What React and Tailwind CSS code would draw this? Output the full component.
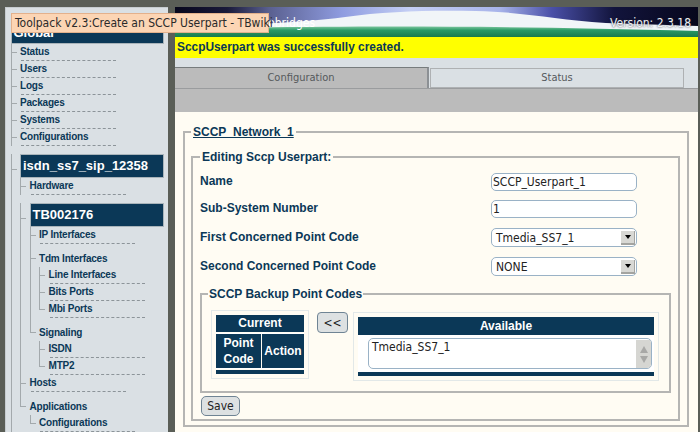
const navy = "bg-[#0b3857]";
const cond = "font-['DejaVu_Sans_Condensed','DejaVu_Sans',sans-serif] [font-stretch:condensed]";

function Tree({ items }) {
  return (
    <ul>
      {items.map((item, i) => (
        <Node key={item.label} item={item} last={i === items.length - 1 && !item.open} />
      ))}
    </ul>
  );
}

function Node({ item, last }) {
  // rows with children sit lower and have no dashed rule
  const tick = item.box ? item.tick : item.kids ? 14 : 8;
  return (
    <li className="relative pl-[9.5px]">
      <span className="absolute left-0 top-0 w-px bg-[#a3a9ac]" style={last ? { height: tick } : { bottom: 0 }} />
      <span className="absolute left-0 w-[6px] h-px bg-[#a3a9ac]" style={{ top: tick }} />
      {item.box ? (
        <div className={`${navy} text-white font-bold text-[13px] border border-[#a9b4ba] h-[24px] mt-[8px] flex items-center pl-[2px]`}>
          {item.label}
        </div>
      ) : item.kids ? (
        <div className="text-[#0b3857] font-bold text-[10px] tracking-[-0.2px] leading-[12px] h-[23px] pt-[9px]">{item.label}</div>
      ) : (
        <div className="text-[#0b3857] font-bold text-[10px] tracking-[-0.2px] leading-[12px] h-[17px] pt-[2px]">
          <div className="w-[95px] h-[15px] ml-[1px] -indent-[1px] border-b border-dashed border-[#8c9499]">{item.label}</div>
        </div>
      )}
      {item.kids && <Tree items={item.kids} />}
    </li>
  );
}

const sideTree = [
  { label: "Status" },
  { label: "Users" },
  { label: "Logs" },
  { label: "Packages" },
  { label: "Systems" },
  { label: "Configurations" },
  {
    label: "isdn_ss7_sip_12358",
    box: true,
    tick: 15,
    open: true,
    kids: [
      { label: "Hardware" },
      {
        label: "TB002176",
        box: true,
        tick: 15,
        kids: [
          { label: "IP Interfaces" },
          {
            label: "Tdm Interfaces",
            kids: [{ label: "Line Interfaces" }, { label: "Bits Ports" }, { label: "Mbi Ports" }],
          },
          {
            label: "Signaling",
            kids: [{ label: "ISDN" }, { label: "MTP2" }],
          },
        ],
      },
      { label: "Hosts" },
      {
        label: "Applications",
        kids: [{ label: "Configurations" }],
      },
    ],
  },
];

function Banner() {
  return (
    <div className="relative h-[30px] overflow-hidden bg-[#0a0a24]">
      <svg className="absolute inset-0 w-full h-full" viewBox="0 0 522 30" preserveAspectRatio="none">
        <defs>
          <linearGradient id="sky" x1="0" x2="1" y1="0" y2="0">
            <stop offset="0" stopColor="#07071c" />
            <stop offset="0.1" stopColor="#1a1a3a" />
            <stop offset="0.18" stopColor="#5a6090" />
            <stop offset="0.32" stopColor="#8f9ce0" />
            <stop offset="0.45" stopColor="#c4cef4" />
            <stop offset="0.62" stopColor="#a8b4ea" />
            <stop offset="0.72" stopColor="#4a50a8" />
            <stop offset="0.84" stopColor="#12143c" />
            <stop offset="1" stopColor="#07071c" />
          </linearGradient>
          <linearGradient id="grass" x1="0" x2="0" y1="0" y2="1">
            <stop offset="0" stopColor="#7ac49c" />
            <stop offset="0.35" stopColor="#2a9a66" />
            <stop offset="1" stopColor="#197a4c" />
          </linearGradient>
        </defs>
        <rect width="522" height="30" fill="url(#sky)" />
        <path d="M0 19 C80 18 130 15 170 10 C210 4 260 3 300 4 C350 5 380 13 430 16 L522 19 L522 30 L0 30 Z" fill="#f1f5f8" />
        <path d="M0 22 C150 19 300 18 522 24 L522 30 L0 30 Z" fill="url(#grass)" />
      </svg>
      <div className={`absolute left-[73px] top-[7px] text-[12px] text-white ${cond}`}>Telcobridges</div>
      <div className={`absolute right-[7px] top-[7px] text-[12px] text-[#eef2f4] ${cond} [text-shadow:0_0_2px_#223]`}>Version: 2.3.18</div>
    </div>
  );
}

function Tabs() {
  return (
    <div className="bg-[#dae0e4]">
      <div className="flex h-[30px] pt-[9px] pr-[14px]">
        <div className={`w-[254px] bg-[#bbbbbb] border-t border-[#777c7d] border-r-2 border-r-[#8c9094] text-center text-[11px] leading-[20px] text-[#55595c] ${cond}`}>
          Configuration
        </div>
        <div className={`ml-[1px] flex-1 h-[20px] mt-px border border-[#aeb1b3] text-center text-[11px] leading-[18px] text-[#55595c] ${cond}`}>
          Status
        </div>
      </div>
      <div className="h-[24px] bg-[#bbbbbb] border-t border-[#9a9c9e]" />
    </div>
  );
}

function Field({ label, children, className }) {
  return (
    <div className={`flex items-center justify-between ${className}`}>
      <span className="text-[12px] font-bold text-[#0b3857] pb-[2px]">{label}</span>
      {children}
    </div>
  );
}

const inputCls = `w-[146px] border border-[#9ab2c6] rounded-[5px] bg-white text-[#222] text-[12px] ${cond} outline-none`;

function Select({ value }) {
  return (
    <div className={`${inputCls} h-[19px] flex items-center justify-between pl-[4px] pr-[1px]`}>
      <span>{value}</span>
      <span className="w-[14px] h-[14px] bg-[#d8d8d4] border-b-2 border-r border-[#a4a4a0] flex items-center justify-center">
        <span className="w-0 h-0 border-x-[3px] border-x-transparent border-t-[4px] border-t-black" />
      </span>
    </div>
  );
}

function Form() {
  return (
    <div className="flex-1 bg-[#fffcf3] pl-[8px] pr-[9px] pt-[13px]">
      <fieldset className="border-2 border-[#b5b5b3] pl-[6px] pr-[7px] h-[302px]">
        <legend className="px-[2px] text-[12px] font-bold text-[#0b3857] underline leading-[14px]">SCCP_Network_1</legend>
        <fieldset className="border-2 border-[#b5b5b3] pl-[7px] pr-[7px] mt-[11px] h-[271px]">
          <legend className="px-[2px] text-[12px] font-bold text-[#0b3857] leading-[14px]">Editing Sccp Userpart:</legend>
          <div className="pr-[34px]">
            <Field label="Name" className="h-[18px] mt-[9px]">
              <input readOnly value="SCCP_Userpart_1" className={`${inputCls} h-[18px] pl-[1px]`} />
            </Field>
            <Field label="Sub-System Number" className="h-[18px] mt-[9px]">
              <input readOnly value="1" className={`${inputCls} h-[18px] pl-[1px]`} />
            </Field>
            <Field label="First Concerned Point Code" className="h-[19px] mt-[10px]">
              <Select value="Tmedia_SS7_1" />
            </Field>
            <Field label="Second Concerned Point Code" className="h-[19px] mt-[10px]">
              <Select value="NONE" />
            </Field>
          </div>
          <fieldset className="border-2 border-[#b5b5b3] h-[106px] mt-[11px] pl-[9px] pr-[10px] flex">
            <legend className="-ml-[3px] px-[1px] text-[12px] font-bold text-[#0b3857] leading-[14px]">SCCP Backup Point Codes</legend>
            <div className="flex items-start mt-[9px]">
              <div className="w-[98px] h-[69px] border border-[#e2e8e8] p-[4px] text-white text-[12px] font-bold text-center leading-[16px]">
                <div className={`${navy} h-[17px]`}>Current</div>
                <div className="flex gap-px mt-px border-y border-white">
                  <div className={`${navy} w-[45px] h-[34px] pt-px`}>Point<br />Code</div>
                  <div className={`${navy} flex-1 flex items-center justify-center`}>Action</div>
                </div>
                <div className={`${navy} h-[4px] mt-px`} />
              </div>
              <button className={`w-[31px] h-[21px] ml-[8px] mt-[2px] border border-[#6f8494] rounded-[4px] bg-[#dde1e2] text-[12px] text-[#222] ${cond} leading-none`}>&lt;&lt;</button>
              <div className="w-[306px] h-[69px] ml-[5px] mt-[2px] border border-[#e2e8e8] p-[4px] flex flex-col">
                <div className={`${navy} h-[18px] text-white text-[12px] font-bold text-center leading-[18px]`}>Available</div>
                <div className="bg-white flex-1 pl-[10px] pr-[2px] pt-[3px]">
                  <div className={`h-[31px] border border-[#9ab2c6] rounded-[5px] flex justify-between pl-[3px] pt-px text-[12px] leading-[14px] text-[#222] ${cond} overflow-hidden`}>
                    Tmedia_SS7_1
                    <span className="w-[15px] bg-[#d6d6d2] flex flex-col items-center justify-around py-[4px]">
                      <span className="w-0 h-0 border-x-[4px] border-x-transparent border-b-[7px] border-b-[#a8a8a6]" />
                      <span className="w-0 h-0 border-x-[4px] border-x-transparent border-t-[7px] border-t-[#a8a8a6]" />
                    </span>
                  </div>
                </div>
                <div className={`${navy} h-[4px]`} />
              </div>
            </div>
          </fieldset>
          <button className={`block w-[39px] h-[20px] mt-[3px] ml-[1px] border border-[#6f8494] rounded-[5px] bg-[#dde1e2] text-[12px] text-[#222] ${cond} leading-none`}>Save</button>
        </fieldset>
      </fieldset>
    </div>
  );
}

export default function App() {
  return (
    <div className="relative h-[432px] overflow-hidden bg-[#5a5e57] flex pt-[7px] pl-[5px] pr-[4px] gap-[7px] font-['Liberation_Sans',Arial,sans-serif]">
      <aside className="w-[163px] shrink-0 bg-[#dae0e4] border-l border-t border-[#c6ccd0] pl-[4.5px] pr-[4px]">
        <div className={`${navy} mt-[17px] h-[19px] border border-[#a9b4ba] text-white text-[13px] font-bold pl-[2px] leading-[14px]`}>Global</div>
        <Tree items={sideTree} />
      </aside>
      <main className="flex-1 flex flex-col">
        <Banner />
        <div className="h-[21px] bg-[#ffff00] pl-[2px] text-[11.9px] leading-[21px] font-bold text-[#0b3857]">SccpUserpart was successfully created.</div>
        <Tabs />
        <Form />
      </main>
      <div className={`absolute left-[11px] top-[13px] w-[258px] h-[20px] bg-[#fcd5b4] border border-[#e3b18c] pl-[3px] text-[12px] leading-[18px] text-[#2a2a2a] ${cond} whitespace-nowrap`}>
        Toolpack v2.3:Create an SCCP Userpart - TBwiki
      </div>
    </div>
  );
}
